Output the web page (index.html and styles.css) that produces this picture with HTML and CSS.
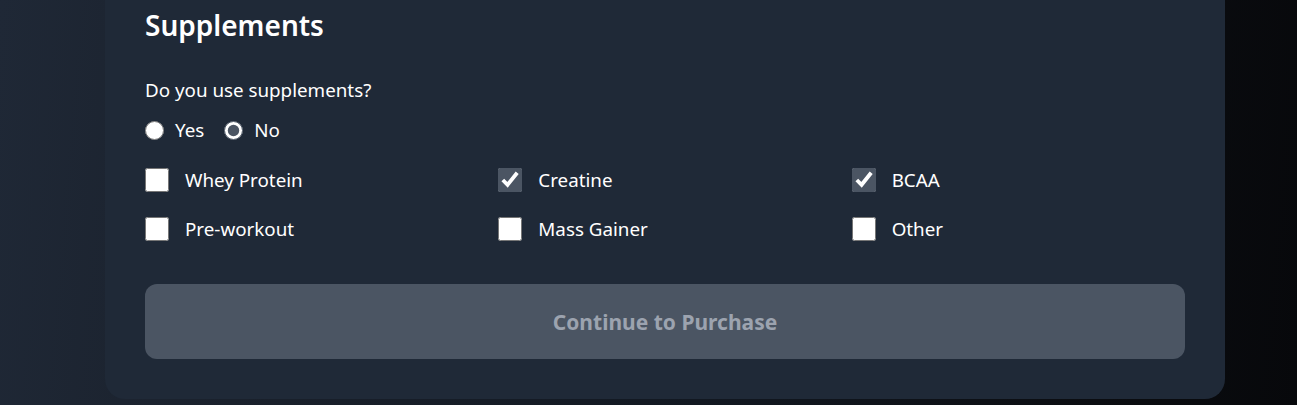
FILE: index.html
```html
<!DOCTYPE html>
<html lang="en">
<head>
<meta charset="utf-8">
<title>Supplements</title>
<link rel="stylesheet" href="styles.css">
</head>
<body>
<div class="page">
  <section class="card">
    <div class="spacer"></div>
    <h2 class="title">Supplements</h2>
    <p class="question">Do you use supplements?</p>
    <div class="radios">
      <label class="radio"><input type="radio" name="use" value="yes"><span>Yes</span></label>
      <label class="radio"><input type="radio" name="use" value="no" checked><span>No</span></label>
    </div>
    <div class="grid">
      <label class="check"><input type="checkbox"><span>Whey Protein</span></label>
      <label class="check"><input type="checkbox" checked><span>Creatine</span></label>
      <label class="check"><input type="checkbox" checked><span>BCAA</span></label>
      <label class="check"><input type="checkbox"><span>Pre-workout</span></label>
      <label class="check"><input type="checkbox"><span>Mass Gainer</span></label>
      <label class="check"><input type="checkbox"><span>Other</span></label>
    </div>
    <button class="continue" type="button" disabled>Continue to Purchase</button>
  </section>
</div>
</body>
</html>
```

FILE: styles.css
```css
html, body {
  margin: 0;
  padding: 0;
  height: 100%;
  overflow: hidden;
}

body {
  font-family: "Noto Sans", "Open Sans", sans-serif;
  color: #ffffff;
  background: linear-gradient(95deg, #1f2836 0%, #1a212c 20%, #121821 55%, #0b0d11 85%, #07080b 100%);
}

.page {
  height: 100vh;
  display: flex;
  flex-direction: column;
  justify-content: flex-end;
  padding: 0 0 6px 105px;
  box-sizing: border-box;
}

.card {
  flex-shrink: 0;
  width: 1120px;
  box-sizing: border-box;
  background: #1f2937;
  border-radius: 20px;
  padding: 0 40px 40px 40px;
  display: flex;
  flex-direction: column;
}

.spacer {
  height: 200px;
}

.title {
  margin: 0;
  font-size: 28px;
  line-height: 34px;
  font-weight: 600;
  color: #ffffff;
}

.question {
  margin: 36px 0 0 0;
  font-size: 18.8px;
  line-height: 24px;
  color: #ffffff;
}

.radios {
  margin-top: 16px;
  display: flex;
  gap: 20px;
  height: 24px;
}

.radio {
  display: flex;
  align-items: center;
  gap: 11px;
  font-size: 18.8px;
  line-height: 24px;
}

.radio input {
  margin: 0;
  width: 19px;
  height: 19px;
  accent-color: #4b5563;
}

.grid {
  margin-top: 26px;
  display: grid;
  grid-template-columns: repeat(3, 1fr);
  column-gap: 20px;
  row-gap: 25px;
}

.check {
  display: flex;
  align-items: center;
  gap: 16px;
  height: 24px;
  font-size: 18.8px;
  line-height: 24px;
}

.check input {
  margin: 0;
  width: 24px;
  height: 24px;
  accent-color: #4b5563;
}

.continue {
  margin-top: 43px;
  height: 75px;
  border: none;
  border-radius: 12px;
  background: #4b5563;
  color: #9ca3af;
  font-family: "Noto Sans", "Open Sans", sans-serif;
  font-size: 21px;
  font-weight: 700;
  cursor: not-allowed;
}
```
